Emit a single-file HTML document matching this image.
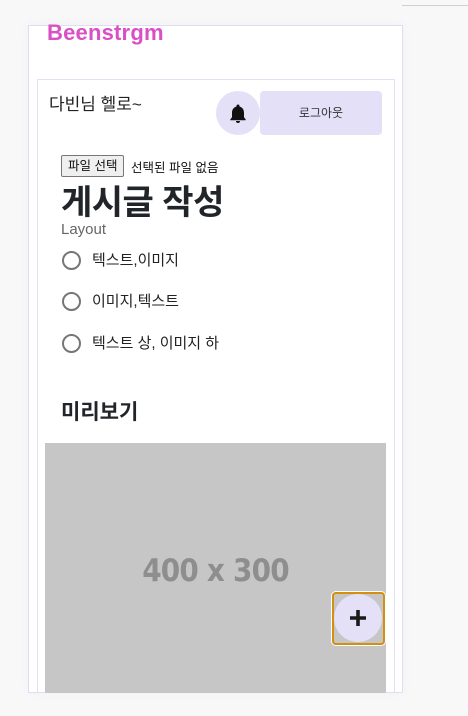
<!DOCTYPE html>
<html><head><meta charset="utf-8"><style>
*{margin:0;padding:0;box-sizing:border-box}
body{width:468px;height:716px;background:#f8f8f8;position:relative;overflow:hidden;font-family:"Liberation Sans","Noto Sans CJK KR",sans-serif;color:#222}
.abs{position:absolute}
.line{left:402px;right:0;top:5px;height:1px;background:#cfcfcf}
.card{left:28px;top:25px;width:375px;height:668px;background:#fff;border:1px solid #e0dcf6;box-shadow:0 0 12px rgba(0,0,0,0.03);overflow:hidden}
.logo{left:47px;top:20px;font-size:22px;font-weight:bold;color:#d94fc6;letter-spacing:0.2px}
.inner{left:8px;top:53px;width:358px;height:640px;border:1px solid #e3e0f6;background:#fff}
.hello{left:49px;top:90px;font-size:17px;color:#222}
.bell{left:216px;top:91px;width:44px;height:44px;border-radius:50%;background:#e3e0f8}
.logout{left:260px;top:91px;width:122px;height:44px;border-radius:4px;background:#e3e0f8;font-size:12px;text-align:center;line-height:44px;color:#333}
.filebtn{left:61px;top:155px;height:22px;padding:0 6px;border:1px solid #777;border-radius:2px;background:#efefef;font-size:12.5px;line-height:20px;color:#111}
.nofile{left:131px;top:157px;font-size:12.5px;color:#111}
.h1{left:61px;top:175px;font-size:34px;font-weight:bold;color:#212529;letter-spacing:-0.5px}
.layout{left:61px;top:221px;font-size:15px;color:#666}
.radio{width:19px;height:19px;border:2px solid #767676;border-radius:50%;left:62px}
.rl{left:92px;font-size:15px;color:#222}
.h2{left:61px;top:396px;font-size:21px;font-weight:bold;color:#212529}
.img{left:45px;top:443px;width:341px;height:250px;background:#c6c6c6}
.imgt{left:45px;top:553px;width:341px;text-align:center;font-size:31px;font-weight:bold;color:#8e8e8e;font-family:"DejaVu Sans",sans-serif;font-stretch:condensed;letter-spacing:-0.8px}
.fab{left:332px;top:592px;width:53px;height:53px;border:2px solid #d4900c;border-radius:4px;box-shadow:0 0 0 1px #fff}
.fabc{left:334px;top:594px;width:48px;height:48px;border-radius:50%;background:#e3e0f8}
</style></head><body>
<div class="abs line"></div>
<div class="abs card"><div class="abs inner"></div></div>
<div class="abs logo">Beenstrgm</div>
<div class="abs hello">다빈님 헬로~</div>
<div class="abs bell"><svg width="44" height="44" viewBox="0 0 44 44"><path d="M22 13.5c-.9 0-1.5.6-1.5 1.4v.6c-2.8.7-4.5 3.1-4.5 6.2v4.6l-1.6 2v.9h15.2v-.9l-1.6-2v-4.6c0-3.1-1.7-5.5-4.5-6.2v-.6c0-.8-.6-1.4-1.5-1.4zM20 30h4a2 2 0 0 1-4 0z" fill="#111"/></svg></div>
<div class="abs logout">로그아웃</div>
<div class="abs filebtn">파일 선택</div>
<div class="abs nofile">선택된 파일 없음</div>
<div class="abs h1">게시글 작성</div>
<div class="abs layout">Layout</div>
<div class="abs radio" style="top:251px"></div><div class="abs rl" style="top:249px">텍스트,이미지</div>
<div class="abs radio" style="top:292px"></div><div class="abs rl" style="top:290px">이미지,텍스트</div>
<div class="abs radio" style="top:334px"></div><div class="abs rl" style="top:332px">텍스트 상, 이미지 하</div>
<div class="abs h2">미리보기</div>
<div class="abs img"></div>
<div class="abs imgt">400 x 300</div>
<div class="abs fab"></div>
<div class="abs fabc"><svg width="48" height="48" viewBox="0 0 48 48"><path d="M24 16v16M16 24h16" stroke="#1a1a1a" stroke-width="3.6"/></svg></div>
</body></html>
